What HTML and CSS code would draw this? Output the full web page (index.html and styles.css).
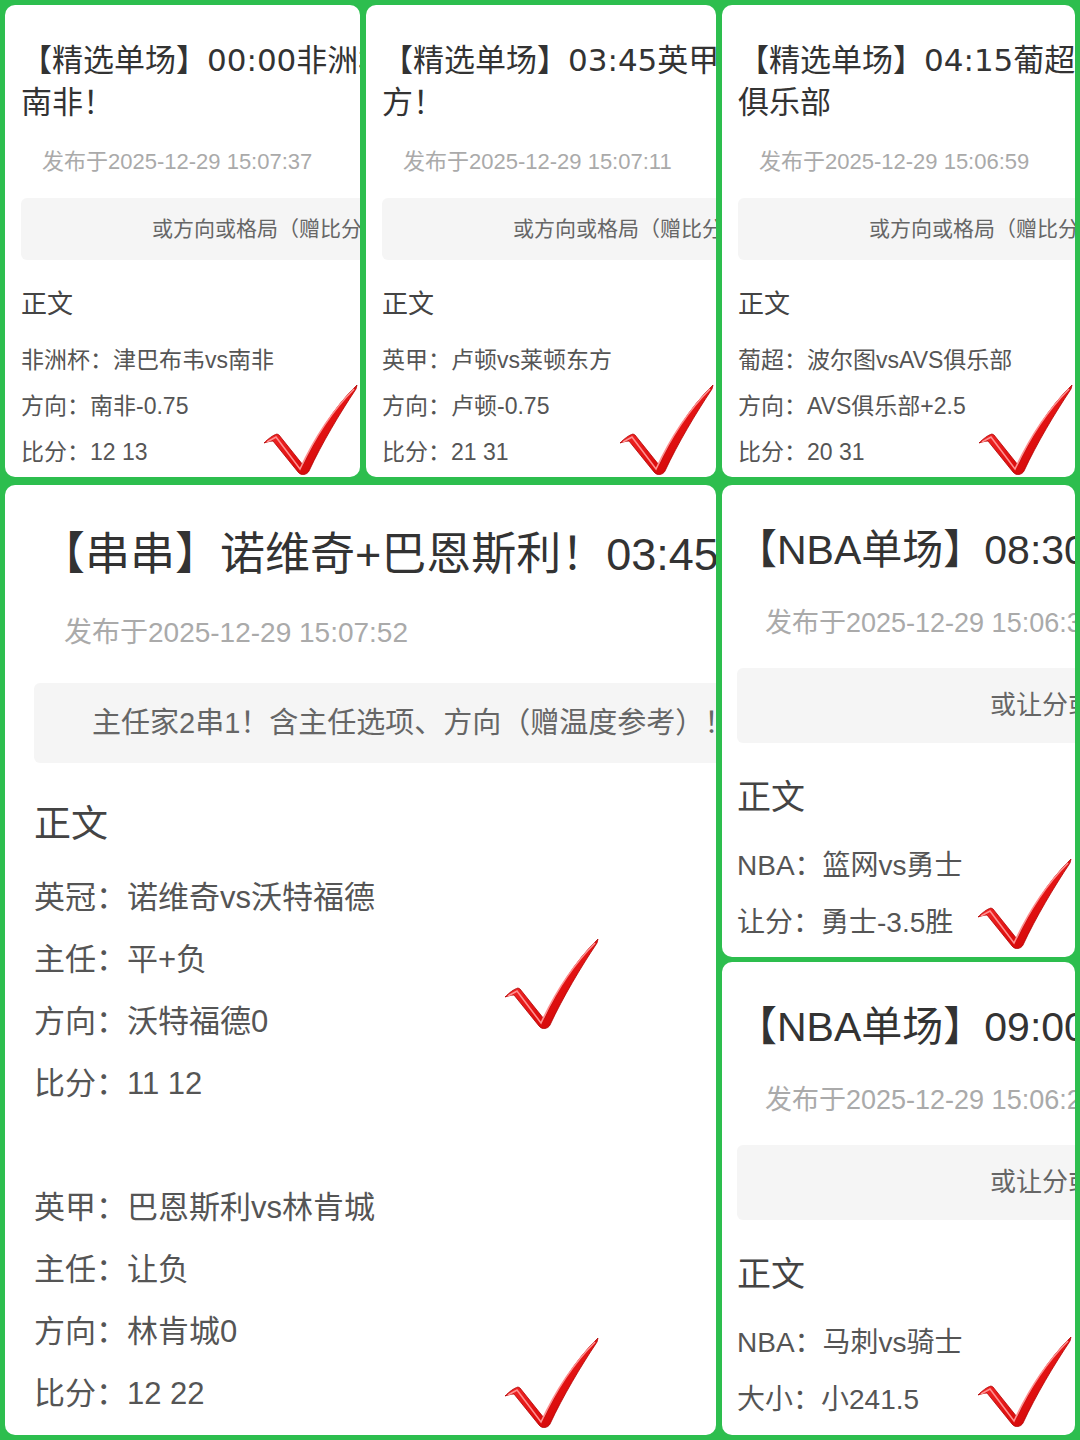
FILE: index.html
```html
<!DOCTYPE html>
<html lang="zh-CN">
<head>
    <meta charset="UTF-8">
    <meta name="viewport" content="width=device-width, initial-scale=1.0">
    <title>精选单场</title>
    <link rel="stylesheet" href="styles.css">
</head>
<body>

    <!-- shared red tick -->
    <svg class="defs" width="0" height="0" aria-hidden="true">
        <defs>
            <linearGradient id="tickFill" x1="0" y1="0" x2="1" y2="1">
                <stop offset="0" stop-color="#ff3b3b"/>
                <stop offset="0.6" stop-color="#e01010"/>
                <stop offset="1" stop-color="#c00000"/>
            </linearGradient>
            <symbol id="tick" viewBox="0 0 94 92">
                <path d="M0,58 C4,54 9,50 13,49 L15,50 L39,80 C52,52 70,22 93,0 L92,4 C76,28 58,58 45,86 C43,90 37,91 34,87 L9,56 C6,56 3,57 0,58 Z" fill="url(#tickFill)" stroke="#b00000" stroke-width="0.8"/>
                <path d="M3,57 L12,52 L36,84 C50,54 68,26 90,4" fill="none" stroke="#ff9090" stroke-width="1.6"/>
            </symbol>
        </defs>
    </svg>

    <div class="board">
        <div class="top-row">
            <article class="card card-sm">
                <h2 class="title"><span>【精选单场】00:00非洲杯：津巴布韦vs</span><span>南非！</span></h2>
                <p class="date">发布于2025-12-29 15:07:37</p>
                <div class="summary">或方向或格局（赠比分参考）！</div>
                <h3 class="section">正文</h3>
                <ul class="lines">
                    <li>非洲杯：津巴布韦vs南非</li>
                    <li>方向：南非-0.75</li>
                    <li>比分：12 13</li>
                </ul>
                <svg class="tick"><use href="#tick"/></svg>
            </article>

            <article class="card card-sm">
                <h2 class="title"><span>【精选单场】03:45英甲：卢顿vs莱顿东</span><span>方！</span></h2>
                <p class="date">发布于2025-12-29 15:07:11</p>
                <div class="summary">或方向或格局（赠比分参考）！</div>
                <h3 class="section">正文</h3>
                <ul class="lines">
                    <li>英甲：卢顿vs莱顿东方</li>
                    <li>方向：卢顿-0.75</li>
                    <li>比分：21 31</li>
                </ul>
                <svg class="tick"><use href="#tick"/></svg>
            </article>

            <article class="card card-sm">
                <h2 class="title"><span>【精选单场】04:15葡超：波尔图vsAVS</span><span>俱乐部</span></h2>
                <p class="date">发布于2025-12-29 15:06:59</p>
                <div class="summary">或方向或格局（赠比分参考）！</div>
                <h3 class="section">正文</h3>
                <ul class="lines">
                    <li>葡超：波尔图vsAVS俱乐部</li>
                    <li>方向：AVS俱乐部+2.5</li>
                    <li>比分：20 31</li>
                </ul>
                <svg class="tick"><use href="#tick"/></svg>
            </article>
        </div>

        <div class="bottom-row">
            <article class="card card-lg">
                <h2 class="title"><span>【串串】诺维奇+巴恩斯利！03:45</span></h2>
                <p class="date">发布于2025-12-29 15:07:52</p>
                <div class="summary">主任家2串1！含主任选项、方向（赠温度参考）！</div>
                <h3 class="section">正文</h3>
                <ul class="lines">
                    <li>英冠：诺维奇vs沃特福德</li>
                    <li>主任：平+负</li>
                    <li>方向：沃特福德0</li>
                    <li>比分：11 12</li>
                </ul>
                <ul class="lines lines-next">
                    <li>英甲：巴恩斯利vs林肯城</li>
                    <li>主任：让负</li>
                    <li>方向：林肯城0</li>
                    <li>比分：12 22</li>
                </ul>
                <svg class="tick tick-first"><use href="#tick"/></svg>
                <svg class="tick tick-second"><use href="#tick"/></svg>
            </article>

            <div class="side">
                <article class="card card-md">
                    <h2 class="title"><span>【NBA单场】08:30篮网vs勇士</span></h2>
                    <p class="date">发布于2025-12-29 15:06:35</p>
                    <div class="summary">或让分或大小！</div>
                    <h3 class="section">正文</h3>
                    <ul class="lines">
                        <li>NBA：篮网vs勇士</li>
                        <li>让分：勇士-3.5胜</li>
                    </ul>
                    <svg class="tick"><use href="#tick"/></svg>
                </article>

                <article class="card card-md">
                    <h2 class="title"><span>【NBA单场】09:00马刺vs骑士</span></h2>
                    <p class="date">发布于2025-12-29 15:06:21</p>
                    <div class="summary">或让分或大小！</div>
                    <h3 class="section">正文</h3>
                    <ul class="lines">
                        <li>NBA：马刺vs骑士</li>
                        <li>大小：小241.5</li>
                    </ul>
                    <svg class="tick"><use href="#tick"/></svg>
                </article>
            </div>
        </div>
    </div>

</body>
</html>
```

FILE: styles.css
```css
body {
    margin: 0;
    background-color: #2dbe4e;
    font-family: "Liberation Sans", "Noto Sans CJK SC", sans-serif;
    color: #333;
}

.defs {
    position: absolute;
    width: 0;
    height: 0;
}

.board {
    padding: 5px;
    height: 1430px;
    display: flex;
    flex-direction: column;
    gap: 8px;
}

.top-row {
    display: grid;
    grid-template-columns: 355px 350px 353px;
    column-gap: 6px;
    height: 472px;
}

.bottom-row {
    display: grid;
    grid-template-columns: 711px 353px;
    column-gap: 6px;
    height: 950px;
}

.side {
    display: grid;
    grid-template-rows: 472px 473px;
    row-gap: 5px;
}

.card {
    position: relative;
    overflow: hidden;
    background: #fff;
    border-radius: 10px;
}

.title {
    margin: 0;
    font-weight: normal;
    color: #333;
}

.title span {
    display: block;
    white-space: nowrap;
}

.date {
    margin: 0;
    color: #aaa;
    white-space: nowrap;
}

.summary {
    background: #f5f5f5;
    border-radius: 6px;
    color: #666;
    white-space: nowrap;
    margin-right: -200px;
}

.section {
    margin: 0;
    font-weight: normal;
    color: #444;
}

.lines {
    list-style: none;
    margin: 0;
    padding: 0;
    color: #555;
    white-space: nowrap;
}

.tick {
    position: absolute;
    width: 94px;
    height: 92px;
    right: 2px;
    bottom: 0;
}

/* small cards, top row */
.card-sm {
    padding: 34px 0 0 16px;
}

.card-sm .title {
    font-family: "DejaVu Sans", "Noto Sans CJK SC", sans-serif;
    font-size: 31px;
    line-height: 42px;
}

.card-sm .date {
    margin: 25px 0 0 21px;
    font-size: 22px;
    line-height: 28px;
}

.card-sm .summary {
    margin-top: 22px;
    height: 62px;
    line-height: 62px;
    padding-left: 131px;
    font-size: 21px;
}

.card-sm .section {
    margin-top: 26px;
    font-size: 26px;
    line-height: 36px;
}

.card-sm .lines {
    margin-top: 15px;
}

.card-sm .lines li {
    font-size: 23px;
    line-height: 46px;
}

/* large card */
.card-lg {
    padding: 40px 0 0 29px;
}

.card-lg .title {
    margin-left: 6px;
    font-size: 45px;
    line-height: 60px;
}

.card-lg .date {
    margin: 30px 0 0 30px;
    font-size: 28px;
    line-height: 36px;
}

.card-lg .summary {
    margin-top: 32px;
    height: 80px;
    line-height: 80px;
    padding-left: 58px;
    font-size: 29px;
}

.card-lg .section {
    margin-top: 37px;
    font-size: 37px;
    line-height: 50px;
}

.card-lg .lines {
    margin-top: 17px;
}

.card-lg .lines-next {
    margin-top: 62px;
}

.card-lg .lines li {
    font-size: 31px;
    line-height: 62px;
}

.card-lg .tick {
    left: 500px;
    right: auto;
    bottom: auto;
}

.card-lg .tick-first {
    top: 454px;
}

.card-lg .tick-second {
    top: 853px;
}

/* right column cards */
.card-md {
    padding: 40px 0 0 15px;
}

.card-md .title {
    margin-left: -1px;
    font-size: 41px;
    line-height: 50px;
}

.card-md .date {
    margin: 31px 0 0 28px;
    font-size: 27px;
    line-height: 34px;
}

.card-md .summary {
    margin-top: 28px;
    height: 75px;
    line-height: 75px;
    padding-left: 253px;
    font-size: 26px;
}

.card-md .section {
    margin-top: 32px;
    font-size: 34px;
    line-height: 44px;
}

.card-md .lines {
    margin-top: 18px;
}

.card-md .lines li {
    font-size: 28px;
    line-height: 57px;
}

.card-md .tick {
    right: 3px;
    bottom: 6px;
}
```
